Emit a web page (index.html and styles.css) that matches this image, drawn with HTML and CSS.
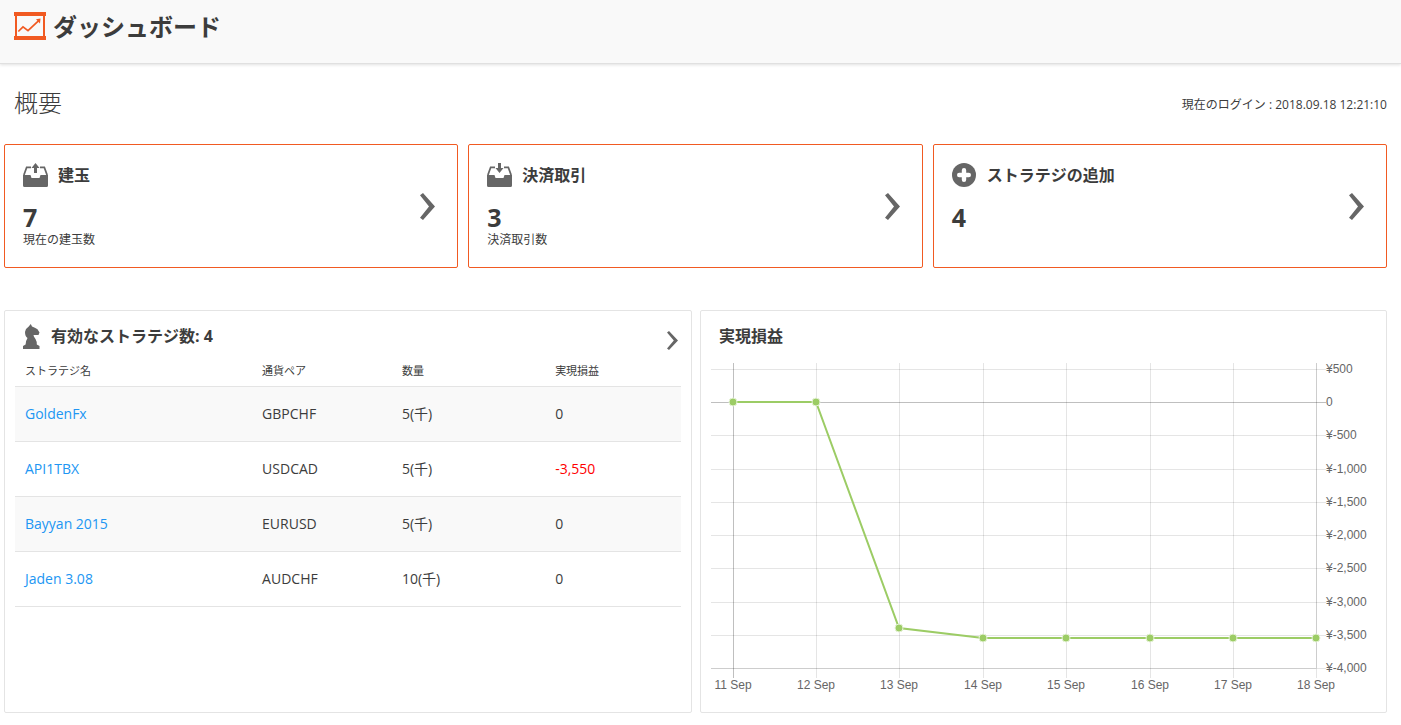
FILE: index.html
```html
<!DOCTYPE html>
<html lang="ja">
<head>
<meta charset="utf-8">
<meta name="viewport" content="width=device-width, initial-scale=1">
<title>ダッシュボード</title>
<link rel="stylesheet" href="styles.css">
</head>
<body>
<header class="page-header">
  <svg class="page-icon" width="32" height="28" viewBox="0 0 32 28" aria-hidden="true">
    <path fill="#f15a22" d="M0 0h32v4H0zM0 24h32v4H0zM1 4h2v20H1zM29 4h2v20h-2z"/>
    <path fill="none" stroke="#f15a22" stroke-width="1.7" d="M4.300 19.500 9 14.800l5 3.900L25 8.300"/>
    <path fill="#f15a22" d="M22 7.300 26.500 6.500 26 11.500z"/>
  </svg>
  <h1 class="page-title">ダッシュボード</h1>
</header>
<main class="content">
  <div class="overview">
    <h2 class="overview-title">概要</h2>
    <p class="login-time">現在のログイン : 2018.09.18 12:21:10</p>
  </div>

  <section class="cards">
    <a class="card" href="#positions">
      <div class="card-body">
        <h3 class="card-title">
          <svg width="25" height="24" viewBox="0 0 25 24" aria-hidden="true">
            <path class="glyph" d="M0 12h7.500l1 3h8l1-3H25v10.500Q25 24 23.500 24h-22Q0 24 0 22.500z"/>
            <path class="glyph-line" d="M.9 12 3.700 4.300H8M17 4.300h4.300L24.100 12"/>
            <path class="glyph" d="M12.500 0 16.500 5H14v5h-3V5H8.500z"/>
          </svg>
          建玉
        </h3>
        <p class="card-value">7</p>
        <p class="card-note">現在の建玉数</p>
      </div>
      <svg class="chevron" width="15" height="27" viewBox="0 0 15 27" aria-hidden="true"><path d="M0 2.300 3 0 15 13.500 3 27 0 24.700 9 13.500z"/></svg>
    </a>
    <a class="card" href="#closed">
      <div class="card-body">
        <h3 class="card-title">
          <svg width="25" height="24" viewBox="0 0 25 24" aria-hidden="true">
            <path class="glyph" d="M0 12h7.500l1 3h8l1-3H25v10.500Q25 24 23.500 24h-22Q0 24 0 22.500z"/>
            <path class="glyph-line" d="M.9 12 3.700 4.300H8M17 4.300h4.300L24.100 12"/>
            <path class="glyph" d="M12.500 10 8.500 5H11V0h3v5h2.500z"/>
          </svg>
          決済取引
        </h3>
        <p class="card-value">3</p>
        <p class="card-note">決済取引数</p>
      </div>
      <svg class="chevron" width="15" height="27" viewBox="0 0 15 27" aria-hidden="true"><path d="M0 2.300 3 0 15 13.500 3 27 0 24.700 9 13.500z"/></svg>
    </a>
    <a class="card" href="#add">
      <div class="card-body">
        <h3 class="card-title">
          <svg width="25" height="24" viewBox="0 0 25 24" aria-hidden="true">
            <circle class="glyph" cx="12" cy="12" r="12"/>
            <path fill="none" stroke="#fff" stroke-width="4.400" stroke-linecap="round" d="M12 7.200v9.600M7.200 12h9.600"/>
          </svg>
          ストラテジの追加
        </h3>
        <p class="card-value">4</p>
      </div>
      <svg class="chevron" width="15" height="27" viewBox="0 0 15 27" aria-hidden="true"><path d="M0 2.300 3 0 15 13.500 3 27 0 24.700 9 13.500z"/></svg>
    </a>
  </section>

  <section class="panels">
    <article class="panel">
      <div class="panel-head">
        <svg width="17" height="25" viewBox="0 0 17 25" aria-hidden="true">
          <path class="glyph" d="M7.800 0 9 2.600Q12 3.500 14.500 5.300L16.500 8.500 15.500 11 10.500 11Q10.500 12.500 12.500 15 14 17.500 13.800 20.500L16.500 22v3H0v-3l2.600-1.500Q2.600 17 4.500 14 2 12.500 2 8 2.500 4.500 5.500 2.800z"/>
        </svg>
        <h3 class="panel-title">有効なストラテジ数: 4</h3>
        <a class="panel-more" href="#strategies" aria-label="有効なストラテジ">
          <svg class="chevron" width="11" height="19" viewBox="0 0 11 19" aria-hidden="true"><path d="M0 1.600 2 0 11 9.500 2 19 0 17.400 6.800 9.500z"/></svg>
        </a>
      </div>
      <table class="strategies">
        <colgroup><col class="col-name"><col class="col-pair"><col class="col-size"><col class="col-profit"></colgroup>
        <thead>
          <tr><th scope="col">ストラテジ名</th><th scope="col">通貨ペア</th><th scope="col">数量</th><th scope="col">実現損益</th></tr>
        </thead>
        <tbody>
          <tr><td><a href="#goldenfx">GoldenFx</a></td><td>GBPCHF</td><td>5(千)</td><td>0</td></tr>
          <tr><td><a href="#api1tbx">API1TBX</a></td><td>USDCAD</td><td>5(千)</td><td class="loss">-3,550</td></tr>
          <tr><td><a href="#bayyan">Bayyan 2015</a></td><td>EURUSD</td><td>5(千)</td><td>0</td></tr>
          <tr><td><a href="#jaden">Jaden 3.08</a></td><td>AUDCHF</td><td>10(千)</td><td>0</td></tr>
        </tbody>
      </table>
    </article>

    <article class="panel">
      <div class="panel-head">
        <h3 class="panel-title">実現損益</h3>
      </div>
      <svg class="chart" viewBox="0 0 665 340" role="img" aria-label="実現損益">
        <path class="grid" d="M0 9.500H615M0 75.500H615M0 109.500H615M0 142.500H615M0 175.500H615M0 208.500H615M0 242.500H615M0 275.500H615M0 308.500H615"/>
        <path class="grid" d="M105.500 3V318M188.500 3V318M272.500 3V318M355.500 3V318M439.500 3V318M522.500 3V318M605.500 3V318"/>
        <path class="grid" d="M0 308.500H605M605.500 3V308"/>
        <path class="zero" d="M0 42.500H615M22.500 3V318"/>
        <polyline class="series" points="22,42 105,42 188,268 272,278 355,278 439,278 522,278 605,278"/>
        <g class="points">
          <circle cx="22" cy="42" r="4"/><circle cx="105" cy="42" r="4"/><circle cx="188" cy="268" r="4"/><circle cx="272" cy="278" r="4"/><circle cx="355" cy="278" r="4"/><circle cx="439" cy="278" r="4"/><circle cx="522" cy="278" r="4"/><circle cx="605" cy="278" r="4"/>
        </g>
        <g class="axis-y">
          <text x="615" y="13">¥500</text><text x="615" y="46">0</text><text x="615" y="79">¥-500</text><text x="615" y="113">¥-1,000</text><text x="615" y="146">¥-1,500</text><text x="615" y="179">¥-2,000</text><text x="615" y="212">¥-2,500</text><text x="615" y="246">¥-3,000</text><text x="615" y="279">¥-3,500</text><text x="615" y="312">¥-4,000</text>
        </g>
        <g class="axis-x">
          <text x="22" y="329">11 Sep</text><text x="105" y="329">12 Sep</text><text x="188" y="329">13 Sep</text><text x="272" y="329">14 Sep</text><text x="355" y="329">15 Sep</text><text x="439" y="329">16 Sep</text><text x="522" y="329">17 Sep</text><text x="605" y="329">18 Sep</text>
        </g>
      </svg>
    </article>
  </section>
</main>
</body>
</html>
```
FILE: styles.css
```css
* {
  box-sizing: border-box;
}

body {
  margin: 0;
  background: #fff;
  color: #3c3c3c;
  font-family: "Open Sans", "Noto Sans CJK JP", sans-serif;
  font-size: 14px;
}

h1, h2, h3, p {
  margin: 0;
}

a {
  color: #2196f3;
  text-decoration: none;
}

svg {
  display: block;
  flex: none;
}

.page-header {
  display: flex;
  align-items: flex-start;
  gap: 7px;
  height: 64px;
  padding: 12px 14px;
  background: #f9f9f9;
  border-bottom: 1px solid #e0e0e0;
  box-shadow: 0 1px 3px rgba(0, 0, 0, 0.12);
}

.page-title {
  font-size: 24px;
  line-height: 30px;
}

.content {
  padding: 0 14px 12px 4px;
}

.overview {
  display: flex;
  align-items: center;
  justify-content: space-between;
  height: 80px;
  padding-left: 10px;
}

.overview-title {
  padding-bottom: 2px;
  font-size: 24px;
  font-weight: 300;
  line-height: 32px;
}

.login-time {
  padding-top: 2px;
  font-size: 12px;
  line-height: 16px;
}

.cards {
  display: grid;
  grid-template-columns: repeat(3, 1fr);
  gap: 10px;
}

.card {
  display: flex;
  align-items: center;
  justify-content: space-between;
  min-height: 124px;
  padding: 16px 22px 16px 18px;
  border: 1px solid #f15a22;
  border-radius: 2px;
  color: inherit;
}

.card-body {
  align-self: flex-start;
}

.card-title {
  display: flex;
  align-items: center;
  gap: 10px;
  font-size: 16px;
  line-height: 28px;
}

.card-value {
  margin-top: 12px;
  font-size: 25px;
  font-weight: 700;
  line-height: 32px;
}

.card-note {
  font-size: 12px;
  line-height: 14px;
}

.glyph,
.chevron {
  fill: #666;
}

.glyph-line {
  fill: none;
  stroke: #666;
  stroke-width: 1.8;
}

.panels {
  display: grid;
  grid-template-columns: 688fr 687fr;
  gap: 8px;
  margin-top: 42px;
}

.panel {
  min-width: 0;
  padding: 11px 10px 12px;
  border: 1px solid #e4e4e4;
  border-radius: 2px;
}

.panel-head {
  display: flex;
  align-items: center;
  gap: 11px;
  height: 28px;
  padding: 0 3px 0 8px;
}

.panel-title {
  font-size: 16px;
  line-height: 24px;
}

.panel-more {
  margin-left: auto;
  padding-top: 8px;
}

.strategies {
  width: 100%;
  margin-top: 6px;
  border-collapse: collapse;
  table-layout: fixed;
}

.col-name {
  width: 35.6%;
}

.col-pair {
  width: 21%;
}

.col-size {
  width: 23%;
}

.strategies th,
.strategies td {
  height: 55px;
  padding: 0 10px;
  border-bottom: 1px solid #e4e4e4;
  font-weight: 400;
  line-height: 20px;
  text-align: left;
}

.strategies th {
  height: 30px;
  font-size: 11px;
}

.strategies tbody tr:nth-child(odd) {
  background: #f9f9f9;
}

.strategies .loss {
  color: #f00;
}

.chart {
  width: 100%;
  height: auto;
  margin-top: 10px;
  font-family: "Liberation Sans", sans-serif;
  font-size: 12px;
  fill: #666;
}

.grid {
  stroke: rgba(0, 0, 0, 0.1);
}

.zero {
  stroke: rgba(0, 0, 0, 0.25);
}

.series {
  fill: none;
  stroke: #9ccc65;
  stroke-width: 2;
}

.points {
  fill: #9ccc65;
  stroke: #e6f2d8;
  stroke-width: 1;
}

.axis-x {
  text-anchor: middle;
}
```
